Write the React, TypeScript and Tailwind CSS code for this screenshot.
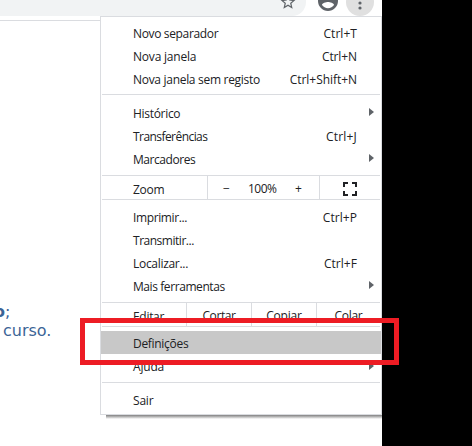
import React from "react";

const Arrow = () => (
  <svg width="5" height="8" viewBox="0 0 5 8" className="mr-[7px] shrink-0">
    <path d="M0 0 L5 4 L0 8Z" fill="#5f6368" />
  </svg>
);

type ItemProps = { label: string; w: string; keys?: string; keysW?: string; sub?: boolean; active?: boolean; low?: boolean };

const Item = ({ label, w, keys, keysW = "tracking-[0.05px]", sub, active, low }: ItemProps) => (
  <div className={`flex h-[23px] items-center pl-8 ${active ? "bg-[#c8c8c8]" : ""}`}>
    <span className={`whitespace-nowrap ${low ? "mt-[4px]" : "mt-[2px]"} ${w}`}>{label}</span>
    <span className="flex-1" />
    {keys && <span className={`mr-6 whitespace-nowrap ${low ? "mt-[4px]" : "mt-[2px]"} ${keysW}`}>{keys}</span>}
    {sub && <Arrow />}
  </div>
);

const Line = () => <div className="mx-px h-px shrink-0 bg-[#dadce0]" />;

export default function App() {
  return (
    <div className="relative flex h-[446px] w-[472px] overflow-hidden bg-white font-['Open_Sans','Noto_Sans',sans-serif] text-[12px] leading-[17px] text-[#202124]">
      <div className="flex w-[382px] shrink-0 flex-col">
        <header className="flex h-4 shrink-0 overflow-hidden">
          <div className="flex h-4 w-[306px] justify-end rounded-br-[14px] bg-[#f1f3f4] pr-[9px]">
            <svg width="18" height="18" viewBox="0 0 24 24" className="-mt-[7px]">
              <path fill="#5f6368" d="M22 9.24l-7.19-.62L12 2 9.19 8.63 2 9.24l5.46 4.73L5.82 21 12 17.27 18.18 21l-1.63-7.03L22 9.24zM12 15.4l-3.76 2.27 1-4.28-3.32-2.88 4.38-.38L12 6.1l1.71 4.04 4.38.38-3.32 2.88 1 4.28L12 15.4z" />
            </svg>
          </div>
          <svg width="20" height="20" viewBox="2 2 20 20" className="-mt-[9px] ml-[12px] shrink-0">
            <path fill="#5f6368" d="M12 2C6.48 2 2 6.48 2 12s4.48 10 10 10 10-4.48 10-10S17.52 2 12 2zm0 3c1.66 0 3 1.34 3 3s-1.34 3-3 3-3-1.34-3-3 1.34-3 3-3zm0 14.2c-2.5 0-4.71-1.28-6-3.22.03-1.99 4-3.08 6-3.08 1.99 0 5.97 1.09 6 3.08-1.29 1.94-3.5 3.22-6 3.22z" />
          </svg>
          <div className="-mt-[12px] ml-[8px] flex h-7 w-7 shrink-0 items-center justify-center rounded-full bg-[#e0e0e0]">
            <svg width="4" height="14" viewBox="0 0 4 14" className="mt-[1px]" fill="#5f6368">
              <circle cx="2" cy="2" r="1.6" />
              <circle cx="2" cy="7" r="1.6" />
              <circle cx="2" cy="12" r="1.6" />
            </svg>
          </div>
        </header>

        <div className="flex">
          <main className="w-[100px] shrink-0 overflow-hidden pt-1">
            <div className="h-px bg-[#dadce0]" />
            <div className="mt-[281px] font-['DejaVu_Sans','Liberation_Sans',sans-serif] text-[16px] leading-[19px] whitespace-nowrap text-[#3c6496]">
              <div className="-ml-[6px]"><b>o</b>;</div>
              <div className="ml-[3px]">curso.</div>
            </div>
          </main>

          <div className="w-[282px] shrink-0">
            <nav className="flex h-[399px] flex-col border border-[#dadce0] bg-white">
              <div className="py-1">
                <Item label="Novo separador" w="tracking-[-0.35px]" keys="Ctrl+T" />
                <Item label="Nova janela" w="tracking-[-0.2px]" keys="Ctrl+N" keysW="tracking-[-0.1px]" />
                <Item label="Nova janela sem registo" w="tracking-[-0.3px]" keys="Ctrl+Shift+N" keysW="tracking-[-0.05px]" />
              </div>
              <Line />
              <div className="pt-[5px] pb-[6px]">
                <Item low label="Histórico" w="tracking-[-0.3px]" sub />
                <Item low label="Transferências" w="tracking-[-0.56px]" keys="Ctrl+J" keysW="tracking-[0.2px]" />
                <Item low label="Marcadores" w="tracking-[-0.45px]" sub />
              </div>
              <Line />
              <div className="flex h-[23px] shrink-0 items-center">
                <span className="mt-[3px] w-[106px] pl-8 tracking-[-0.25px]">Zoom</span>
                <div className="flex h-full w-[113px] items-center border-x border-[#dadce0] pt-px">
                  <span className="ml-[15px] w-[25px]">−</span>
                  <span className="w-[47px] tracking-[-0.5px]">100%</span>
                  <span>+</span>
                </div>
                <svg width="14" height="14" viewBox="0 0 14 14" className="ml-[23px] mt-[2px]" fill="none" stroke="#202124" strokeWidth="2">
                  <path d="M1 5V1H5M9 1H13V5M13 9V13H9M5 13H1V9" />
                </svg>
              </div>
              <Line />
              <div className="pt-1 pb-[6px]">
                <Item low label="Imprimir..." w="tracking-[-0.38px]" keys="Ctrl+P" />
                <Item low label="Transmitir..." w="tracking-[-0.48px]" />
                <Item low label="Localizar..." w="tracking-[-0.3px]" keys="Ctrl+F" />
                <Item low label="Mais ferramentas" w="tracking-[-0.42px]" sub />
              </div>
              <Line />
              <div className="flex h-[23px] shrink-0 items-center">
                <span className="mt-[3px] w-[85px] pl-8 tracking-[-0.3px]">Editar</span>
                <div className="flex h-full w-[66px] items-center justify-center border-x border-[#dadce0] pt-[2px] tracking-[-0.4px]"><span>Cortar</span></div>
                <div className="flex h-full w-[65px] items-center justify-center border-r border-[#dadce0] pt-[2px] tracking-[-0.2px]"><span>Copiar</span></div>
                <span className="mt-[2px] flex-1 pr-px text-center tracking-[-0.3px]">Colar</span>
              </div>
              <Line />
              <div className="pt-1 pb-[5px]">
                <Item label="Definições" w="tracking-[-0.3px]" active />
                <Item label="Ajuda" w="tracking-[-0.2px]" sub />
              </div>
              <Line />
              <div className="pt-[5px]">
                <Item label="Sair" w="tracking-[-0.2px]" />
              </div>
            </nav>
            <div className="ml-[6px] h-1 bg-linear-to-b from-[#808080] to-white" />
          </div>
        </div>
      </div>
      <aside className="flex-1 bg-black" />
      <div className="absolute top-[318px] left-[80px] h-[47px] w-[319px] border-[5px] border-[#ed1c24]" />
    </div>
  );
}
